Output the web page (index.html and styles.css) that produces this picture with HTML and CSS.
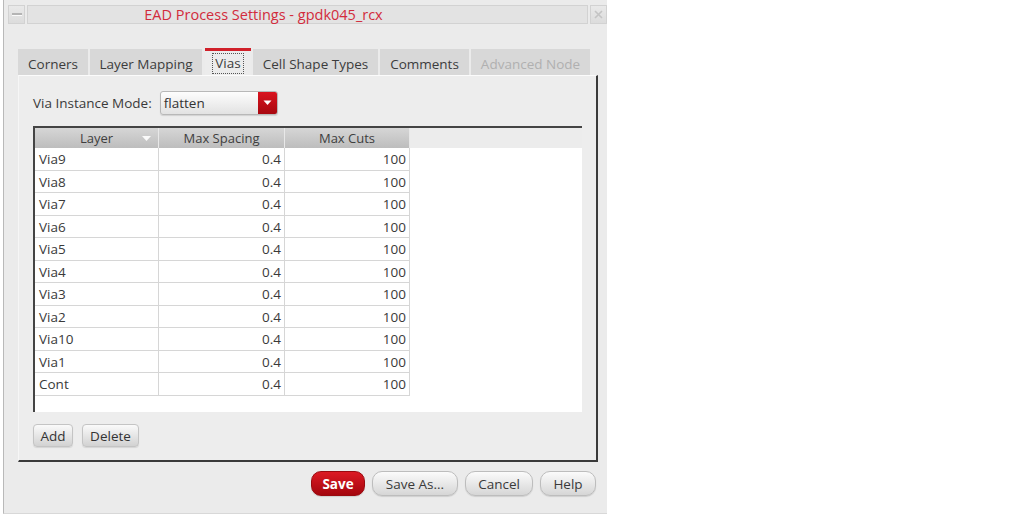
FILE: index.html
```html
<!DOCTYPE html>
<html>
<head>
<meta charset="utf-8">
<link rel="stylesheet" href="styles.css">
</head>
<body>
<div class="window">
  <div class="titlebar">
    <div class="tb-btn"><span class="min-glyph"></span></div>
    <div class="tb-title">EAD Process Settings - gpdk045_rcx</div>
    <div class="tb-btn">
      <svg width="11" height="11" viewBox="0 0 11 11"><path d="M2 2 L9 9 M9 2 L2 9" stroke="#c4c4c4" stroke-width="1.6" fill="none"/></svg>
    </div>
  </div>
  <div class="content">
    <div class="tabs">
      <div class="tab t-corners">Corners</div>
      <div class="tab t-layer">Layer Mapping</div>
      <div class="tab t-vias active"><span class="focus">Vias</span></div>
      <div class="tab t-cell">Cell Shape Types</div>
      <div class="tab t-comments">Comments</div>
      <div class="tab t-adv disabled">Advanced Node</div>
    </div>
    <div class="panel">
      <div class="mode-row">
        <span class="mode-label">Via Instance Mode:</span>
        <div class="combo">
          <span class="combo-text">flatten</span>
          <span class="combo-arrow"><svg width="9" height="6" viewBox="0 0 9 6"><path d="M0.5 0.5 L8.5 0.5 L4.5 5 Z" fill="#fff"/></svg></span>
        </div>
      </div>
      <div class="table">
        <div class="thead">
          <div class="th c1">Layer<svg class="sort" width="9" height="5" viewBox="0 0 9 5"><path d="M0 0 L9 0 L4.5 5 Z" fill="#fafafa"/></svg></div>
          <div class="th c2">Max Spacing</div>
          <div class="th c3">Max Cuts</div>
        </div>
        <div class="tbody">
          <div class="tr"><div class="td c1">Via9</div><div class="td c2 num">0.4</div><div class="td c3 num">100</div></div>
          <div class="tr"><div class="td c1">Via8</div><div class="td c2 num">0.4</div><div class="td c3 num">100</div></div>
          <div class="tr"><div class="td c1">Via7</div><div class="td c2 num">0.4</div><div class="td c3 num">100</div></div>
          <div class="tr"><div class="td c1">Via6</div><div class="td c2 num">0.4</div><div class="td c3 num">100</div></div>
          <div class="tr"><div class="td c1">Via5</div><div class="td c2 num">0.4</div><div class="td c3 num">100</div></div>
          <div class="tr"><div class="td c1">Via4</div><div class="td c2 num">0.4</div><div class="td c3 num">100</div></div>
          <div class="tr"><div class="td c1">Via3</div><div class="td c2 num">0.4</div><div class="td c3 num">100</div></div>
          <div class="tr"><div class="td c1">Via2</div><div class="td c2 num">0.4</div><div class="td c3 num">100</div></div>
          <div class="tr"><div class="td c1">Via10</div><div class="td c2 num">0.4</div><div class="td c3 num">100</div></div>
          <div class="tr"><div class="td c1">Via1</div><div class="td c2 num">0.4</div><div class="td c3 num">100</div></div>
          <div class="tr"><div class="td c1">Cont</div><div class="td c2 num">0.4</div><div class="td c3 num">100</div></div>
        </div>
      </div>
      <div class="panel-buttons">
        <button class="btn small b-add">Add</button>
        <button class="btn small b-del">Delete</button>
      </div>
    </div>
    <div class="footer">
      <button class="pill save">Save</button>
      <button class="pill b-saveas">Save As...</button>
      <button class="pill b-cancel">Cancel</button>
      <button class="pill b-help">Help</button>
    </div>
  </div>
</div>
</body>
</html>
```
FILE: styles.css
```css
html, body {
  margin: 0;
  padding: 0;
  background: #ffffff;
}
body {
  font-family: "Open Sans", "Noto Sans", sans-serif;
  font-size: 13.5px;
  color: #3a3a3a;
}
.window {
  margin-left: 3px;
  width: 604px;
  height: 514px;
  background: #ebebeb;
  border-left: 1px solid #b9b9b9;
  border-bottom: 1px solid #d8d8d8;
  box-sizing: border-box;
}
.titlebar {
  display: flex;
  gap: 2px;
  padding: 5px 0 0 4px;
  height: 24px;
  box-sizing: border-box;
}
.tb-btn {
  width: 17px;
  height: 19px;
  box-sizing: border-box;
  border: 1px solid #d2d2d2;
  background: linear-gradient(#e9e9e9, #dcdcdc);
  display: flex;
  align-items: center;
  justify-content: center;
}
.min-glyph {
  width: 10px;
  height: 2px;
  background: #b4b4b4;
  border-bottom: 1px solid #fafafa;
}
.tb-title {
  flex: 1;
  height: 19px;
  box-sizing: border-box;
  border: 1px solid #d2d2d2;
  background: #e3e3e3;
  color: #d22b3c;
  font-size: 14.5px;
  line-height: 17px;
  text-align: center;
  padding-right: 88px;
}
.content {
  padding: 24px 0 0 14px;
  width: 580px;
}
.tabs {
  display: flex;
  gap: 2px;
  height: 27px;
}
.tab {
  height: 26px;
  margin-top: 1px;
  box-sizing: border-box;
  background: #d8d8d8;
  line-height: 30px;
  text-align: center;
  color: #3c3c3c;
  white-space: nowrap;
}
.t-corners { width: 70px; }
.t-layer { width: 112px; }
.t-vias { width: 46px; margin-left: 1px; }
.t-cell { width: 125px; }
.t-comments { width: 89px; }
.t-adv { width: 119px; }
.tab.active {
  background: #ececec;
  height: 27px;
  margin-top: 0;
  border-top: 3px solid #d0202a;
  line-height: 25px;
}
.focus {
  display: inline-block;
  border: 1px dotted #555;
  line-height: 19px;
  padding: 0 2px;
}
.tab.disabled {
  color: #b0b0b0;
}
.panel {
  height: 387px;
  box-sizing: border-box;
  width: 580px;
  border-top: 1px solid #fbfbfb;
  border-left: 1px solid #f6f6f6;
  border-right: 2px solid #3a3a3a;
  border-bottom: 2px solid #3a3a3a;
  padding: 15px 0 0 14px;
  background: #ededed;
}
.mode-row {
  display: flex;
  align-items: center;
  gap: 8px;
  height: 24px;
}
.mode-label {
  color: #3a3a3a;
}
.combo {
  width: 118px;
  height: 24px;
  box-sizing: border-box;
  border: 1px solid #b8b8b8;
  border-radius: 3px;
  background: linear-gradient(#fdfdfd, #e2e2e2);
  display: flex;
  overflow: hidden;
  box-shadow: 0 1px 1px rgba(0,0,0,0.12);
}
.combo-text {
  flex: 1;
  padding-left: 3px;
  line-height: 22px;
  color: #333;
}
.combo-arrow {
  width: 19px;
  background: linear-gradient(#d9141f, #a80810);
  display: flex;
  align-items: center;
  justify-content: center;
}
.table {
  margin-top: 11px;
  width: 549px;
  height: 286px;
  box-sizing: border-box;
  border-top: 2px solid #444;
  border-left: 2px solid #444;
  display: flex;
  flex-direction: column;
}
.thead {
  display: flex;
  height: 20px;
  background: #ececec;
}
.th {
  box-sizing: border-box;
  height: 20px;
  background: linear-gradient(#d6d6d6, #bdbdbd);
  border-right: 1px solid #e8e8e8;
  text-align: center;
  line-height: 21px;
  color: #3e3e3e;
  font-size: 13px;
  position: relative;
}
.sort {
  position: absolute;
  right: 7px;
  top: 8px;
}
.c1 { width: 124px; }
.c2 { width: 126px; }
.c3 { width: 125px; }
.tbody {
  flex: 1;
  background: #ffffff;
}
.tr {
  display: flex;
  height: 22.5px;
}
.td {
  box-sizing: border-box;
  border-right: 1px solid #d6d6d6;
  border-bottom: 1px solid #d6d6d6;
  padding: 0 4px;
  line-height: 23px;
  color: #3a3a3a;
}
.td.num {
  text-align: right;
  padding-right: 3px;
}
.panel-buttons {
  display: flex;
  gap: 9px;
  margin-top: 12px;
}
.btn {
  height: 23px;
  box-sizing: border-box;
  border: 1px solid #c4c4c4;
  border-radius: 4px;
  background: linear-gradient(#fafafa, #d2d2d2);
  font-family: "Open Sans", "Noto Sans", sans-serif;
  font-size: 13.5px;
  color: #333;
  padding: 0;
  box-shadow: 0 1px 1px rgba(0,0,0,0.1);
}
.b-add { width: 40px; }
.b-del { width: 57px; }
.footer {
  display: flex;
  justify-content: flex-end;
  gap: 7px;
  margin-top: 9px;
  padding-right: 2px;
}
.pill {
  height: 25px;
  box-sizing: border-box;
  border: 1px solid #bdbdbd;
  border-radius: 10px;
  background: linear-gradient(#fbfbfb, #d6d6d6);
  font-family: "Open Sans", "Noto Sans", sans-serif;
  font-size: 13.5px;
  color: #3a3a3a;
  padding: 0;
  box-shadow: 0 1px 1px rgba(0,0,0,0.12);
}
.pill.save {
  width: 54px;
  background: linear-gradient(#dc1a24, #a4060e);
  border-color: #9a0a10;
  color: #ffffff;
  font-weight: bold;
}
.b-saveas { width: 86px; }
.b-cancel { width: 68px; }
.b-help { width: 56px; }
```
